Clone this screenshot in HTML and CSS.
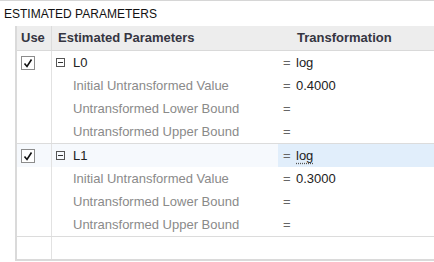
FILE: index.html
```html
<!DOCTYPE html>
<html lang="en">
<head>
	<meta charset="UTF-8">
	<title>Estimated Parameters</title>
	<link rel="stylesheet" href="styles.css">
</head>
<body>
	<div class="panel">
		<h2 class="title">ESTIMATED PARAMETERS</h2>

		<div class="grid">
			<div class="row head">
				<div class="cell use">Use</div>
				<div class="cell name">Estimated Parameters</div>
				<div class="cell trans">Transformation</div>
			</div>

			<div class="group">
				<div class="row">
					<div class="cell use">
						<svg class="check" viewBox="0 0 14 14"><rect x="0.5" y="0.5" width="13" height="13" fill="#fff" stroke="#8c8c8c"/><path d="M3.5 7.5 L6 10.5 L10.5 3.5" fill="none" stroke="#111" stroke-width="1.6"/></svg>
					</div>
					<div class="cell name top"><span class="minus"></span>L0</div>
					<div class="cell trans"><span class="eq">=</span>log</div>
				</div>
				<div class="row">
					<div class="cell use"></div>
					<div class="cell name sub">Initial Untransformed Value</div>
					<div class="cell trans"><span class="eq">=</span>0.4000</div>
				</div>
				<div class="row">
					<div class="cell use"></div>
					<div class="cell name sub">Untransformed Lower Bound</div>
					<div class="cell trans"><span class="eq">=</span></div>
				</div>
				<div class="row">
					<div class="cell use"></div>
					<div class="cell name sub">Untransformed Upper Bound</div>
					<div class="cell trans"><span class="eq">=</span></div>
				</div>
			</div>

			<div class="group">
				<div class="row selected">
					<div class="cell use">
						<svg class="check" viewBox="0 0 14 14"><rect x="0.5" y="0.5" width="13" height="13" fill="#fff" stroke="#8c8c8c"/><path d="M3.5 7.5 L6 10.5 L10.5 3.5" fill="none" stroke="#111" stroke-width="1.6"/></svg>
					</div>
					<div class="cell name top"><span class="minus"></span>L1</div>
					<div class="cell trans active"><span class="eq">=</span><span class="dotted">log</span></div>
				</div>
				<div class="row">
					<div class="cell use"></div>
					<div class="cell name sub">Initial Untransformed Value</div>
					<div class="cell trans"><span class="eq">=</span>0.3000</div>
				</div>
				<div class="row">
					<div class="cell use"></div>
					<div class="cell name sub">Untransformed Lower Bound</div>
					<div class="cell trans"><span class="eq">=</span></div>
				</div>
				<div class="row">
					<div class="cell use"></div>
					<div class="cell name sub">Untransformed Upper Bound</div>
					<div class="cell trans"><span class="eq">=</span></div>
				</div>
			</div>

			<div class="group empty">
				<div class="row">
					<div class="cell use"></div>
					<div class="cell name"></div>
					<div class="cell trans"></div>
				</div>
			</div>
		</div>
	</div>
</body>
</html>
```

FILE: styles.css
```css
body{
	margin: 0;
	font-family: "Liberation Sans", Arial, sans-serif;
	font-size: 13px;
	color: #222;
	background: #fff;
}

.panel{
	border-top: 1px solid #d6d6d6;
	height: 261px;
	overflow: hidden;
}

.title{
	margin: 0;
	padding: 6px 0 0 4px;
	height: 19px;
	font-size: 12px;
	font-weight: normal;
	color: #111;
	line-height: 15px;
}

.grid{
	margin-left: 15px;
	border-left: 2px solid #dadada;
	border-bottom: 2px solid #dadada;
}

.row{
	display: grid;
	grid-template-columns: 35px 226px 1fr;
	height: 23px;
	line-height: 23px;
}

.cell{
	white-space: nowrap;
	overflow: hidden;
}

.use{
	border-right: 1px solid #e2e2e2;
	display: flex;
	align-items: center;
	padding-left: 4px;
}

.head{
	height: 24px;
	line-height: 24px;
	background: #ededed;
	border-bottom: 1px solid #d9d9d9;
	font-weight: bold;
	color: #353541;
}

.head .use{
	border-right-color: #dcdcdc;
	padding-left: 4px;
}

.head .name{
	padding-left: 6px;
}

.head .trans{
	padding-left: 19px;
}

.group{
	border-bottom: 1px solid #dcdcdc;
}

.group.empty{
	border-bottom: none;
}

.group.empty .row{
	height: 22px;
}

.check{
	width: 14px;
	height: 14px;
	display: block;
}

.name{
	padding-left: 4px;
}

.name.top{
	display: flex;
	align-items: center;
}

.minus{
	width: 7px;
	height: 7px;
	border: 1px solid #555;
	margin-right: 8px;
	position: relative;
}

.minus::after{
	content: "";
	position: absolute;
	left: 1px;
	right: 1px;
	top: 3px;
	height: 1px;
	background: #333;
}

.sub{
	padding-left: 21px;
	color: #8a8a8a;
}

.trans{
	padding-left: 5px;
}

.eq{
	color: #666;
	display: inline-block;
	width: 13px;
}

.selected{
	background: #f6f9fd;
}

.active{
	background: #e1eefb;
}

.dotted{
	text-decoration: underline dotted #555;
	text-underline-offset: 3px;
}
```
